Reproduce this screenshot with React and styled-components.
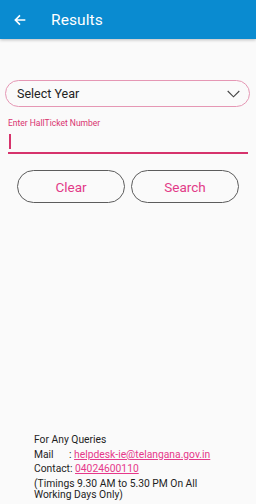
import React from "react";
import styled, { createGlobalStyle } from "styled-components";

const Global = createGlobalStyle`
  html, body {
    margin: 0;
    padding: 0;
    background: #fafafa;
    font-family: Roboto, "Liberation Sans", sans-serif;
  }
  * { box-sizing: border-box; }
`;

const Page = styled.div`
  min-height: 100vh;
  display: flex;
  flex-direction: column;
  background: #fafafa;
`;

const Header = styled.header`
  height: 39px;
  display: flex;
  align-items: center;
  padding: 0 0 0 12px;
  background-color: #0a8bd0;
  color: #ffffff;
  box-shadow: 0px 1px 3px rgba(0, 0, 0, 0.25);
`;

const Back = styled.svg`
  width: 16px;
  height: 16px;
  margin-right: 23px;
`;

const Title = styled.h1`
  margin: 0;
  font-size: 15.5px;
  font-weight: 400;
  letter-spacing: 0.1px;
`;

const Body = styled.main`
  padding: 41px 6px 0 5px;
`;

const Select = styled.div`
  height: 27px;
  display: flex;
  align-items: center;
  justify-content: space-between;
  padding: 0 9px 0 11px;
  border: 1px solid #e597b4;
  border-radius: 14px;
  font-size: 12.5px;
  color: #232323;
`;

const Chevron = styled.svg`
  width: 13px;
  height: 8px;
`;

const Field = styled.div`
  margin: 11px 2px 0 3px;
`;

const Label = styled.div`
  font-size: 8.5px;
  color: #d9336f;
  line-height: 10px;
`;

const Input = styled.div`
  height: 24px;
  margin-top: 2px;
  display: flex;
  align-items: center;
  border-bottom: 2px solid #d6336c;
`;

const Caret = styled.span`
  width: 1.5px;
  height: 15px;
  margin-left: 1px;
  background: #d6336c;
`;

const Buttons = styled.div`
  display: flex;
  gap: 6px;
  margin: 16px 0 0 12px;
`;

const Button = styled.button`
  width: 108px;
  height: 33px;
  border: 1px solid #5c5c5c;
  border-radius: 17px;
  background: transparent;
  font-family: Roboto, "Liberation Sans", sans-serif;
  font-size: 13.5px;
  color: #e23a88;
  padding: 0;
`;

const Footer = styled.footer`
  margin-top: auto;
  padding: 0 30px 3px 34px;
  font-size: 10.3px;
  line-height: 11.6px;
  color: #1e1e1e;
  display: flex;
  flex-direction: column;
  gap: 3px;
`;

const Row = styled.div`
  display: flex;
`;

const Key = styled.span`
  width: ${(p) => p.w || "auto"};
`;

const Link = styled.a`
  color: #e6388a;
  text-decoration: underline;
`;

export default function App() {
  return (
    <Page>
      <Global />
      <Header>
        <Back viewBox="0 0 24 24" fill="none" stroke="#fff" strokeWidth="2.4">
          <path d="M20 12H5M12 5l-7 7 7 7" />
        </Back>
        <Title>Results</Title>
      </Header>
      <Body>
        <Select>
          Select Year
          <Chevron viewBox="0 0 13 8" fill="none" stroke="#444" strokeWidth="1.1">
            <path d="M0.7 1l5.8 5.8L12.3 1" />
          </Chevron>
        </Select>
        <Field>
          <Label>Enter HallTicket Number</Label>
          <Input>
            <Caret />
          </Input>
        </Field>
        <Buttons>
          <Button>Clear</Button>
          <Button>Search</Button>
        </Buttons>
      </Body>
      <Footer>
        <div>For Any Queries</div>
        <Row>
          <Key w="35px">Mail</Key>
          <span>:&nbsp;</span>
          <Link>helpdesk-ie@telangana.gov.in</Link>
        </Row>
        <Row>
          <Key>Contact:&nbsp;</Key>
          <Link>04024600110</Link>
        </Row>
        <div>(Timings 9.30 AM to 5.30 PM On All Working Days Only)</div>
      </Footer>
    </Page>
  );
}
